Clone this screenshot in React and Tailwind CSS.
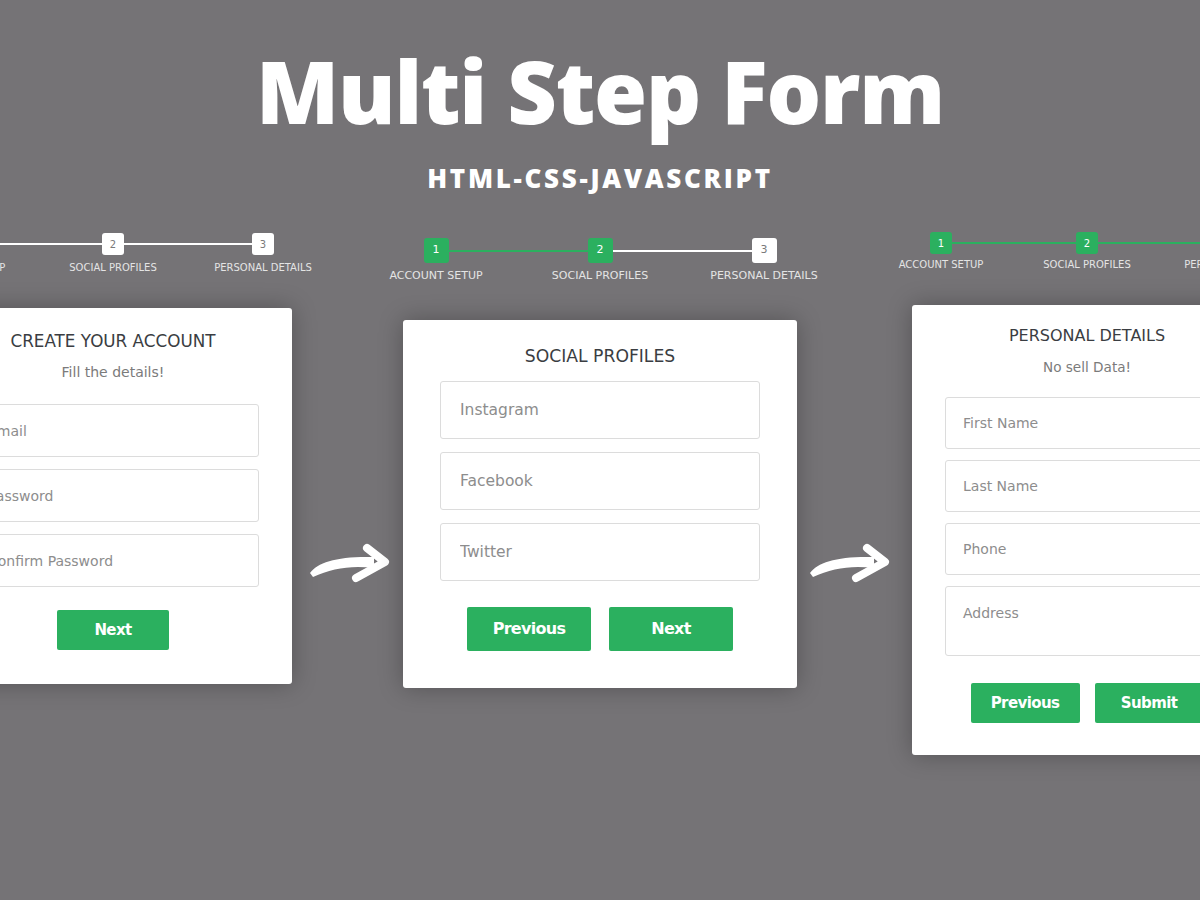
import React from "react";

const GREEN = "bg-[#2bb05f]";

function Box({ n, active, cls }) {
  return (
    <div
      className={`${cls} shrink-0 rounded-[3px] flex items-center justify-center font-['DejaVu_Sans',sans-serif] ${
        active ? "bg-[#2bb05f] text-white" : "bg-white text-[#7a7a7a]"
      }`}
    >
      {n}
    </div>
  );
}

function Line({ green }) {
  return <div className={`flex-1 h-[2px] ${green ? "bg-[#2bb05f]" : "bg-white"}`} />;
}

function Progress({ rowCls, boxCls, actives, lines, labelsCls, labelCls }) {
  const labels = ["ACCOUNT SETUP", "SOCIAL PROFILES", "PERSONAL DETAILS"];
  return (
    <div className="flex flex-col items-center">
      <div className={`flex items-center ${rowCls}`}>
        <Box n="1" active={actives[0]} cls={boxCls} />
        <Line green={lines[0]} />
        <Box n="2" active={actives[1]} cls={boxCls} />
        <Line green={lines[1]} />
        <Box n="3" active={actives[2]} cls={boxCls} />
      </div>
      <div className={`flex shrink-0 ${labelsCls}`}>
        {labels.map((l) => (
          <div
            key={l}
            className={`${labelCls} shrink-0 text-center whitespace-nowrap text-[#e4e4e4] font-['DejaVu_Sans',sans-serif]`}
          >
            {l}
          </div>
        ))}
      </div>
    </div>
  );
}

function Field({ ph, cls }) {
  return (
    <input
      readOnly
      placeholder={ph}
      className={`${cls} w-full block bg-white border border-[#dcdcdc] rounded-[3px] outline-none placeholder:text-[#8d8d8d] font-['DejaVu_Sans',sans-serif]`}
    />
  );
}

function Btn({ children, cls }) {
  return (
    <div
      className={`${cls} ${GREEN} rounded-[2px] flex items-center justify-center text-white font-bold font-['DejaVu_Sans',sans-serif]`}
    >
      {children}
    </div>
  );
}

function Arrow({ cls }) {
  return (
    <svg className={cls} width="80" height="40" viewBox="0 0 80 40" fill="none">
      <path d="M0,30 C8,19 28,13 64,14 L64,25 C42,22 22,25 3,34 Z" fill="white" />
      <path
        d="M57,5 L75,19 L46,35"
        stroke="white"
        strokeWidth="8"
        strokeLinecap="round"
        strokeLinejoin="round"
        fill="none"
      />
    </svg>
  );
}

export default function App() {
  return (
    <div className="w-[1200px] h-[900px] overflow-hidden bg-[#757376] flex flex-col items-center pt-[48px]">
      <h1 className="text-white font-['Open_Sans',sans-serif] font-extrabold text-[86px] leading-[86px] tracking-[-1.2px]">
        Multi Step Form
      </h1>
      <div className="mt-[31px] text-white font-['Open_Sans',sans-serif] font-extrabold text-[26px] leading-[26px] tracking-[2.7px]">
        HTML-CSS-JAVASCRIPT
      </div>

      <div className="mt-[39px] w-[1200px] flex items-start">
        {/* Left panel */}
        <div className="ml-[-66px] w-[358px] shrink-0 mt-[3px] flex flex-col items-center">
          <Progress
            rowCls="w-[322px]"
            boxCls="w-[22px] h-[22px] text-[10px]"
            actives={[true, false, false]}
            lines={[false, false]}
            labelsCls="w-[450px] mt-[6px]"
            labelCls="w-[150px] text-[10px] leading-[13px]"
          />
          <div className="mt-[34px] w-[358px] bg-white rounded-[3px] shadow-[0_0_24px_rgba(0,0,0,0.28)] px-[33px] pt-[22px] pb-[34px] flex flex-col items-center">
            <div className="text-[16.8px] leading-[22px] text-[#3a3d42] font-['DejaVu_Sans',sans-serif]">
              CREATE YOUR ACCOUNT
            </div>
            <div className="mt-[11px] text-[14px] leading-[18px] text-[#7b7b7b] font-['DejaVu_Sans',sans-serif]">
              Fill the details!
            </div>
            <div className="mt-[23px] w-full flex flex-col gap-[12px]">
              <Field ph="Email" cls="h-[53px] px-[20px] text-[14px]" />
              <Field ph="Password" cls="h-[53px] px-[20px] text-[14px]" />
              <Field ph="Confirm Password" cls="h-[53px] px-[20px] text-[14px]" />
            </div>
            <Btn cls="mt-[23px] w-[112px] h-[40px] text-[15px] tracking-[-0.6px]">Next</Btn>
          </div>
        </div>

        <Arrow cls="ml-[18px] mt-[313px] shrink-0" />

        {/* Middle panel */}
        <div className="ml-[13px] w-[394px] shrink-0 mt-[8px] flex flex-col items-center">
          <Progress
            rowCls="w-[353px]"
            boxCls="w-[25px] h-[25px] text-[11px]"
            actives={[true, true, false]}
            lines={[true, false]}
            labelsCls="w-[492px] mt-[6px]"
            labelCls="w-[164px] text-[11px] leading-[14px]"
          />
          <div className="mt-[37px] w-[394px] bg-white rounded-[3px] shadow-[0_0_24px_rgba(0,0,0,0.28)] px-[37px] pt-[25px] pb-[37px] flex flex-col items-center">
            <div className="text-[17.2px] leading-[22px] text-[#3a3d42] font-['DejaVu_Sans',sans-serif]">
              SOCIAL PROFILES
            </div>
            <div className="mt-[14px] w-full flex flex-col gap-[13px]">
              <Field ph="Instagram" cls="h-[58px] px-[19px] text-[15.5px]" />
              <Field ph="Facebook" cls="h-[58px] px-[19px] text-[15.5px]" />
              <Field ph="Twitter" cls="h-[58px] px-[19px] text-[15.5px]" />
            </div>
            <div className="mt-[26px] flex gap-[18px]">
              <Btn cls="w-[124px] h-[44px] text-[16px] tracking-[-0.7px]">Previous</Btn>
              <Btn cls="w-[124px] h-[44px] text-[16px] tracking-[-0.7px]">Next</Btn>
            </div>
          </div>
        </div>

        <Arrow cls="ml-[13px] mt-[313px] shrink-0" />

        {/* Right panel */}
        <div className="ml-[22px] w-[350px] shrink-0 mt-[2px] flex flex-col items-center">
          <Progress
            rowCls="w-[314px]"
            boxCls="w-[22px] h-[22px] text-[10px]"
            actives={[true, true, true]}
            lines={[true, true]}
            labelsCls="w-[438px] mt-[4px]"
            labelCls="w-[146px] text-[10px] leading-[13px]"
          />
          <div className="mt-[34px] w-[350px] bg-white rounded-[3px] shadow-[0_0_24px_rgba(0,0,0,0.28)] px-[33px] pt-[20px] pb-[32px] flex flex-col items-center">
            <div className="text-[16px] leading-[22px] text-[#3a3d42] font-['DejaVu_Sans',sans-serif]">
              PERSONAL DETAILS
            </div>
            <div className="mt-[11px] text-[13.6px] leading-[18px] text-[#7b7b7b] font-['DejaVu_Sans',sans-serif]">
              No sell Data!
            </div>
            <div className="mt-[21px] w-full flex flex-col gap-[11px]">
              <Field ph="First Name" cls="h-[52px] px-[17px] text-[14px]" />
              <Field ph="Last Name" cls="h-[52px] px-[17px] text-[14px]" />
              <Field ph="Phone" cls="h-[52px] px-[17px] text-[14px]" />
              <textarea
                readOnly
                placeholder="Address"
                className="h-[70px] w-full block resize-none bg-white border border-[#dcdcdc] rounded-[3px] outline-none px-[17px] pt-[16px] text-[14px] leading-[20px] placeholder:text-[#8d8d8d] font-['DejaVu_Sans',sans-serif]"
              />
            </div>
            <div className="mt-[27px] flex gap-[15px]">
              <Btn cls="w-[109px] h-[40px] text-[15px] tracking-[-0.6px]">Previous</Btn>
              <Btn cls="w-[109px] h-[40px] text-[15px] tracking-[-0.6px]">Submit</Btn>
            </div>
          </div>
        </div>
      </div>
    </div>
  );
}
